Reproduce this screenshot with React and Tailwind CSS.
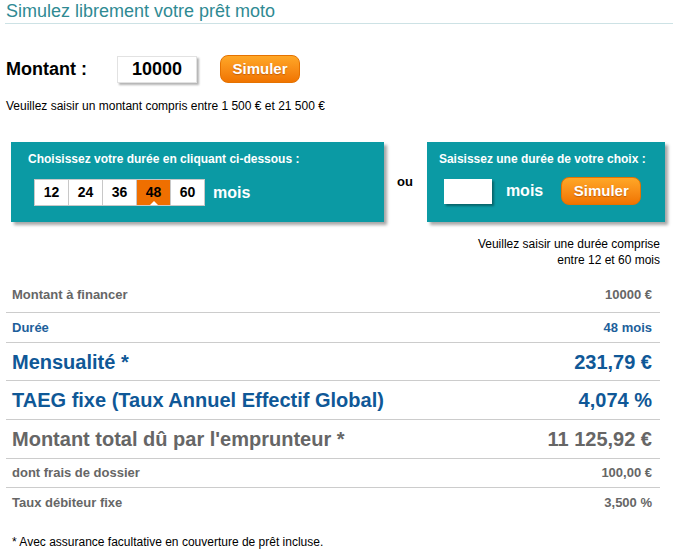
import React from 'react';

const durations = [12, 24, 36, 48, 60];

const rows = [
  { label: 'Montant à financer', value: '10000 €', h: 'h-[35px]', size: 'text-[13px]', color: 'text-[#666666]' },
  { label: 'Durée', value: '48 mois', h: 'h-[30px]', size: 'text-[13px]', color: 'text-[#1d5f9b]' },
  { label: 'Mensualité *', value: '231,79 €', h: 'h-[38px]', size: 'text-[20px]', color: 'text-[#0f5897]' },
  { label: 'TAEG fixe (Taux Annuel Effectif Global)', value: '4,074 %', h: 'h-[39px]', size: 'text-[20px]', color: 'text-[#0f5897]' },
  { label: "Montant total dû par l'emprunteur *", value: '11 125,92 €', h: 'h-[39px]', size: 'text-[20px]', color: 'text-[#666666]' },
  { label: 'dont frais de dossier', value: '100,00 €', h: 'h-[29px]', size: 'text-[13px]', color: 'text-[#666666]' },
  { label: 'Taux débiteur fixe', value: '3,500 %', h: 'h-[30px]', size: 'text-[13px]', color: 'text-[#666666]', last: true },
];

const SimulerButton = () => (
  <button className="w-[80px] h-[28px] rounded-[8px] bg-gradient-to-b from-[#ffa726] to-[#f07400] border border-[#e57200] text-white font-bold text-[15px] [text-shadow:0_1px_1px_rgba(150,60,0,0.5)]">
    Simuler
  </button>
);

export default function App() {
  return (
    <div className="w-[675px] h-[554px] bg-white font-['Liberation_Sans',Arial,sans-serif] text-black overflow-hidden">
      {/* Title */}
      <div className="ml-[5px] w-[668px] border-b border-[#cde2e5] pt-[1px] pb-[1px]">
        <h1 className="text-[18px] leading-[21px] text-[#2f8a93] ml-[1px]">Simulez librement votre prêt moto</h1>
      </div>

      {/* Montant */}
      <div className="flex items-center mt-[31px] pl-[6px] h-[28px]">
        <span className="w-[111px] text-[18px] font-bold">Montant :</span>
        <div className="w-[80px] h-[27px] bg-white border border-[#e2e2e2] shadow-[2px_2px_2px_rgba(0,0,0,0.3)] flex items-center justify-center text-[18px] font-bold">
          10000
        </div>
        <div className="ml-[23px]">
          <SimulerButton />
        </div>
      </div>
      <p className="pl-[6px] mt-[16px] text-[12px] leading-[15px]">
        Veuillez saisir un montant compris entre 1 500 € et 21 500 €
      </p>

      {/* Durée boxes */}
      <div className="flex items-start mt-[28px]">
        <div className="ml-[11px] w-[373px] h-[80px] bg-[#0b9aa4] shadow-[3px_3px_3px_rgba(0,0,0,0.35)] pl-[17px] pt-[9px]">
          <p className="text-white font-bold text-[12px] leading-[16px]">Choisissez votre durée en cliquant ci-dessous :</p>
          <div className="flex items-center mt-[12px] ml-[6px]">
            <div className="flex border border-[#c8c8c8] bg-[#c8c8c8] gap-[1px]">
              {durations.map((d) => (
                <div
                  key={d}
                  className={`relative w-[33px] h-[25px] flex items-center justify-center text-[14px] font-bold ${d === 48 ? 'bg-[#ef6f00]' : 'bg-white'}`}
                >
                  {d}
                  {d === 48 && (
                    <span className="absolute bottom-0 left-1/2 -translate-x-1/2 w-0 h-0 border-l-[4px] border-r-[4px] border-b-[4px] border-l-transparent border-r-transparent border-b-white" />
                  )}
                </div>
              ))}
            </div>
            <span className="ml-[8px] text-white font-bold text-[16px]">mois</span>
          </div>
        </div>

        <span className="ml-[13px] mt-[30px] text-[13px] font-bold">ou</span>

        <div className="ml-[14px] w-[238px] h-[80px] bg-[#0b9aa4] shadow-[3px_3px_3px_rgba(0,0,0,0.35)] pl-[12px] pt-[9px]">
          <p className="text-white font-bold text-[12px] leading-[16px]">Saisissez une durée de votre choix :</p>
          <div className="flex items-center mt-[10px] ml-[5px]">
            <div className="w-[48px] h-[25px] bg-white shadow-[2px_2px_2px_rgba(0,0,0,0.35)]" />
            <span className="ml-[14px] text-white font-bold text-[16px]">mois</span>
            <div className="ml-[18px]">
              <SimulerButton />
            </div>
          </div>
        </div>
      </div>

      <p className="w-[660px] text-right mt-[14px] text-[12px] leading-[16px]">
        Veuillez saisir une durée comprise
        <br />
        entre 12 et 60 mois
      </p>

      {/* Résultats */}
      <div className="ml-[6px] w-[654px] mt-[10px]">
        {rows.map((r) => (
          <div
            key={r.label}
            className={`flex items-center justify-between pl-[6px] pr-[8px] font-bold ${r.h} ${r.size} ${r.color} ${r.last ? '' : 'border-b border-[#cccccc]'}`}
          >
            <span>{r.label}</span>
            <span>{r.value}</span>
          </div>
        ))}
      </div>

      <p className="pl-[12px] mt-[17px] text-[12px] leading-[15px]">
        * Avec assurance facultative en couverture de prêt incluse.
      </p>
    </div>
  );
}
